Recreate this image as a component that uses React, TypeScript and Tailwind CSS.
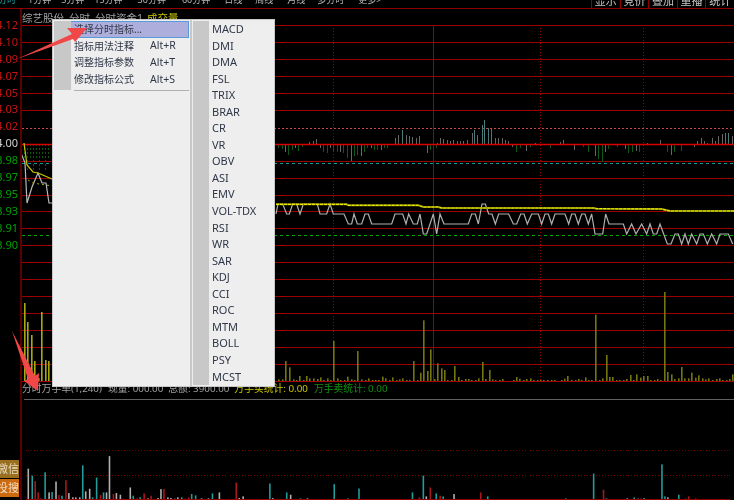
import React from "react";

const FONT = "font-['Noto_Sans','Noto_Sans_CJK_SC',sans-serif]";
const GRID = [25,42,59,76,93,110,161,178,195,211,228,245,262,279,296,313,330,347,364,381];

const AXIS: [string, string][] = [
  ["4.12","text-[#c81414]"],["4.10","text-[#c81414]"],["4.09","text-[#c81414]"],["4.07","text-[#c81414]"],
  ["4.05","text-[#c81414]"],["4.03","text-[#c81414]"],["4.02","text-[#c81414]"],["4.00","text-[#d0d0d0]"],
  ["3.98","text-[#00a000]"],["3.97","text-[#00a000]"],["3.95","text-[#00a000]"],["3.93","text-[#00a000]"],
  ["3.91","text-[#00a000]"],["3.90","text-[#00a000]"],
];

const TABS: [string, string][] = [
  ["1分钟","ml-[10px]"],["5分钟","ml-[10px]"],["15分钟","ml-[10px]"],["30分钟","ml-[15px]"],["60分钟","ml-[16px]"],
  ["日线","ml-[14px]"],["周线","ml-[13px]"],["月线","ml-[14px]"],["多分时","ml-[12px]"],["更多>","ml-[14px]"],
];
const BUTTONS = ["显示","竞价","叠加","重播","统计"];
const SUB = ["MACD","DMI","DMA","FSL","TRIX","BRAR","CR","VR","OBV","ASI","EMV","VOL-TDX","RSI","WR","SAR","KDJ","CCI","ROC","MTM","BOLL","PSY","MCST"];
const MENU: [string, string][] = [["指标用法注释","Alt+R"],["调整指标参数","Alt+T"],["修改指标公式","Alt+S"]];

const VOL_LEFT: [number, number][] = [[24,303],[27,322],[31,335],[34,361],[38,378],[41,312],[45,360],[48,361]];
const VOL_Z: [number, number][] = [[25,298],[36,298],[46,243],[56,262],[68,298],[78,300],[88,288],[98,300],[108,288],[118,295],[128,295],[140,297],[150,292],[160,300],[170,295],[180,300],[190,183],[200,295],[210,300],[222,300],[232,290],[242,298],[252,300],[262,213],[272,298],[284,300],[294,295],[305,300],[315,300],[325,300],[335,290],[345,295],[357,300],[367,292],[377,300],[387,298],[397,295],[407,300],[418,300],[430,243],[440,300],[450,278],[460,121],[470,273],[480,208],[491,297],[502,250],[512,265],[522,270],[532,300],[542,300],[552,258],[564,291],[574,300],[584,297],[594,297],[604,300],[614,300],[624,295],[636,246],[646,297],[656,270],[666,298],[676,300],[686,300],[696,297],[728,300],[738,291],[748,296],[758,300],[768,297],[780,295],[790,300],[800,300],[810,300],[820,300],[830,300],[842,300],[852,300],[872,300],[882,296],[892,288],[902,300],[914,300],[924,297],[934,300],[944,292],[954,300],[964,300],[974,104],[986,300],[996,295],[1007,225],[1017,291],[1027,291],[1037,300],[1047,300],[1059,300],[1069,297],[1079,285],[1089,300],[1099,283],[1109,293],[1119,288],[1131,288],[1141,300],[1151,300],[1161,297],[1171,300],[1181,36],[1191,276],[1203,283],[1213,297],[1223,295],[1233,261],[1243,295],[1253,295],[1263,278],[1275,293],[1285,286],[1295,295],[1305,298],[1315,295],[1327,300],[1337,297],[1347,295],[1357,300],[1367,300],[1377,297],[1387,283]];

const UP: [number, number][] = [[118,65],[128,62],[138,58],[375,55],[385,45],[397,30],[407,45],[417,48],[427,50],[437,55],[447,48],[500,70],[510,55],[520,58],[530,60],[540,62],[550,60],[560,62],[570,62],[580,62],[590,60],[605,40],[612,30],[620,45],[635,15],[643,0],[653,25],[663,25],[675,55],[685,55],[695,55],[705,60],[715,62],[795,68],[870,65],[880,60],[1130,68],[1170,60],[1280,62],[1292,55],[1302,62],[1312,68],[1325,55],[1335,62],[1345,48],[1355,42],[1365,38],[1375,38],[1385,48]];
const DOWN: [number, number][] = [[25,85],[35,88],[45,95],[55,105],[65,90],[75,85],[85,92],[95,80],[150,85],[160,95],[170,98],[180,85],[190,95],[200,95],[210,95],[220,98],[230,115],[242,122],[252,108],[262,105],[272,108],[282,95],[292,85],[302,85],[312,90],[322,90],[332,90],[342,85],[352,85],[470,98],[480,90],[497,85],[725,82],[738,95],[750,85],[768,92],[780,80],[840,85],[912,90],[940,80],[955,95],[975,108],[985,118],[995,125],[1005,95],[1015,88],[1040,80],[1065,88],[1075,100],[1085,95],[1098,92],[1108,95],[1190,95],[1202,105],[1212,95],[1232,92],[1272,80]];

const WHITE: [number, number][] = [[18,282],[24,252],[38,252],[50,282],[58,282],[68,252],[80,252],[90,282],[100,252],[142,252],[150,282],[170,282],[180,252],[190,282],[222,282],[235,312],[245,312],[252,282],[262,312],[275,312],[285,282],[295,282],[305,312],[365,312],[375,282],[398,282],[408,312],[416,282],[430,312],[442,312],[450,282],[460,342],[470,342],[490,282],[500,342],[510,282],[522,312],[595,312],[605,282],[616,282],[625,312],[636,252],[646,252],[656,282],[666,282],[676,312],[686,282],[716,282],[730,312],[740,312],[752,282],[762,282],[772,312],[785,282],[805,282],[815,312],[825,282],[835,282],[845,312],[855,282],[885,282],[896,312],[905,282],[915,282],[925,312],[935,282],[945,282],[955,312],[965,282],[975,342],[998,342],[1007,282],[1017,312],[1060,312],[1070,342],[1085,312],[1098,342],[1115,312],[1130,342],[1140,312],[1150,342],[1160,342],[1170,312],[1192,372],[1203,372],[1215,342],[1225,342],[1235,372],[1245,342],[1255,372],[1265,342],[1280,372],[1290,342],[1300,342],[1312,372],[1325,342],[1340,372],[1350,342],[1375,342],[1388,372]];
const YELLOW: [number, number][] = [[18,253],[230,253],[235,256],[445,256],[460,261],[505,261],[515,264],[970,264],[980,266],[1175,267],[1200,273],[1392,273]];

type Low = [number, number, "g" | "t" | "r"];
const LOW_L: Low[] = [[72,205,"g"],[83,226,"t"],[93,243,"r"],[102,277,"r"],[112,295,"r"],[122,216,"t"],[134,277,"g"],[144,276,"t"],[155,244,"g"],[165,285,"r"],[175,287,"t"],[185,240,"r"],[195,279,"g"],[207,292,"g"],[217,292,"g"],[227,292,"g"],[237,195,"t"],[247,274,"g"],[257,266,"g"],[267,292,"t"],[278,232,"t"],[290,285,"r"],[299,277,"t"],[309,277,"g"],[319,167,"g"],[329,282,"r"],[339,279,"g"],[351,284,"g"],[361,296,"r"],[371,297,"g"],[381,262,"g"],[391,287,"t"],[402,295,"r"],[411,292,"t"],[423,280,"r"],[434,295,"g"],[444,287,"r"],[454,298,"g"],[464,294,"g"],[474,267,"g"],[484,267,"r"],[495,292,"g"],[505,294,"g"],[516,296,"g"],[526,292,"g"],[536,292,"t"],[546,296,"r"],[558,292,"r"],[568,282,"t"],[578,286,"t"],[588,298,"g"],[598,295,"g"],[608,298,"g"],[618,295,"g"],[630,280,"t"],[650,277,"g"],[660,298,"g"],[680,297,"g"],[702,247,"r"],[712,294,"g"],[722,289,"g"],[742,297,"g"],[804,250,"t"],[814,294,"g"],[856,277,"t"],[866,284,"g"],[896,295,"t"],[918,295,"g"],[948,297,"g"],[958,297,"g"],[978,297,"g"],[1000,252,"t"],[1010,297,"g"],[1040,295,"t"],[1073,265,"t"]];
const LOW_R: Low[] = [[136,277,"t"],[156,292,"r"],[168,226,"t"],[178,289,"g"],[188,262,"r"],[208,280,"t"],[218,287,"r"],[228,289,"t"],[260,282,"g"],[342,277,"r"],[362,289,"t"],[600,295,"t"],[650,297,"g"],[684,220,"t"],[714,269,"r"],[724,295,"t"],[736,297,"g"],[786,295,"g"],[808,292,"t"],[818,296,"g"],[828,295,"r"],[838,294,"t"],[890,192,"t"],[900,289,"t"],[910,292,"g"],[942,284,"t"],[962,296,"t"],[972,289,"r"],[992,295,"r"]];
const LOW_COLOR = { g: "#b0b0b0", t: "#249c9c", r: "#a81818" };

const pts = (a: [number, number][]) => a.map(([x, y]) => `${270 + x / 3},${120 + y / 3}`).join(" ");

function MainChart() {
  return (
    <svg className="block shrink-0" width={712} height={358} viewBox="22 25 712 358">
      {GRID.map((y) => (
        <line key={y} x1={22} x2={734} y1={y + 0.5} y2={y + 0.5} stroke="#9c0000" strokeWidth={1.2} />
      ))}
      <line x1={22} x2={734} y1={128.5} y2={128.5} stroke="#c84848" strokeDasharray="2 2" shapeRendering="crispEdges" />
      <line x1={22} x2={734} y1={163.5} y2={163.5} stroke="#0c9c9c" strokeDasharray="3 3" shapeRendering="crispEdges" />
      <line x1={22} x2={734} y1={235.5} y2={235.5} stroke="#00a800" strokeDasharray="3 3" shapeRendering="crispEdges" />
      <line x1={433.5} x2={433.5} y1={25} y2={381} stroke="#a00000" shapeRendering="crispEdges" />
      {[333, 540, 643].map((x) => (
        <line key={x} x1={x + 0.5} x2={x + 0.5} y1={25} y2={381} stroke="#900000" strokeDasharray="1 2" shapeRendering="crispEdges" />
      ))}
      {[24,27,30,33,36,39,42,45,48].map((x, i) => (
        <line key={x} x1={x + 0.5} x2={x + 0.5} y1={144} y2={i % 2 ? 170 : 160} stroke="#0a5a0a" strokeDasharray="2 2" />
      ))}
      {UP.map(([x, t]) => {
        const px = Math.round(270 + x / 3) + 0.5;
        return <line key={"u" + x} x1={px} x2={px} y1={144} y2={120 + t / 3} stroke={t < 40 ? "#4a7a7a" : "#666666"} shapeRendering="crispEdges" />;
      })}
      {DOWN.map(([x, b], i) => {
        const px = Math.round(270 + x / 3) + 0.5;
        return <line key={"d" + x} x1={px} x2={px} y1={144} y2={120 + b / 3} stroke={i % 3 === 2 ? "#666666" : "#0c5a16"} shapeRendering="crispEdges" />;
      })}
      <line x1={22} x2={734} y1={144.5} y2={144.5} stroke="#d80000" strokeWidth={1.5} />
      <polyline points="21,153 25,163 27,203 32,187 38,173 42,183 46,183 49,203 52,203" fill="none" stroke="#b8b8b8" strokeWidth={1.2} />
      <polyline points="24,143 27,165 33,172 38,173 52,179" fill="none" stroke="#c8c800" strokeWidth={1.2} />
      <polyline points="28,180 33,183 52,186" fill="none" stroke="#a8a800" strokeDasharray="2 3" />
      <polyline points={pts(WHITE)} fill="none" stroke="#b0b0b0" strokeWidth={1.2} />
      <polyline points={pts(YELLOW)} fill="none" stroke="#8a8a00" strokeWidth={2} />
      <polyline points={pts(YELLOW)} fill="none" stroke="#ecec00" strokeWidth={1.2} strokeDasharray="3 1" />
      <line x1={22} x2={734} y1={381.5} y2={381.5} stroke="#a80000" shapeRendering="crispEdges" />
      {VOL_LEFT.map(([x, t]) => (
        <rect key={x} x={x} y={t} width={1.6} height={381 - t} fill="#a8a810" />
      ))}
      {VOL_Z.map(([x, t]) => (
        <rect key={x} x={Math.round(270 + x / 3)} y={280 + t / 3} width={1.6} height={381 - (280 + t / 3)} fill="#747410" />
      ))}
    </svg>
  );
}

function LowerChart() {
  return (
    <svg className="block" width={712} height={101} viewBox="22 399 712 101">
      <line x1={22} x2={734} y1={449.5} y2={449.5} stroke="#700000" strokeDasharray="1 2" shapeRendering="crispEdges" />
      <line x1={22} x2={734} y1={475.5} y2={475.5} stroke="#800000" strokeDasharray="1 2" shapeRendering="crispEdges" />
      {LOW_L.map(([x, t, c]) => (
        <rect key={x} x={Math.round(x / 3)} y={400 + t / 3} width={1.6} height={100 - t / 3} fill={LOW_COLOR[c]} />
      ))}
      {LOW_R.map(([x, t, c]) => (
        <rect key={x} x={Math.round(367 + x / 3)} y={400 + t / 3} width={1.6} height={100 - t / 3} fill={LOW_COLOR[c]} />
      ))}
      <line x1={22} x2={734} y1={499.5} y2={499.5} stroke="#900000" shapeRendering="crispEdges" />
    </svg>
  );
}

export default function App() {
  return (
    <div className={`relative flex h-[500px] w-[734px] flex-col overflow-hidden bg-black blur-[0.35px] ${FONT}`}>
      {/* top toolbar */}
      <div className="flex h-[9px] shrink-0 items-start justify-between overflow-hidden border-b border-[#900000]">
        <div className="-mt-[7px] flex text-[9px] leading-[13px] text-[#b8b8b8]">
          <span className="-ml-[2px] w-[20px] text-[#20a0a0]">分时</span>
          {TABS.map(([t, m]) => (
            <span key={t} className={`whitespace-nowrap ${m}`}>{t}</span>
          ))}
        </div>
        <div className="flex">
          {BUTTONS.map((b) => (
            <div key={b} className="-mt-[7px] flex h-[16px] w-[28.6px] justify-center border-l border-[#900000] text-[11px] leading-[15px] text-[#c8c8c8]">{b}</div>
          ))}
        </div>
      </div>

      <div className="flex min-h-0 flex-1">
        {/* price axis */}
        <div className="flex w-[22px] shrink-0 flex-col border-r-2 border-[#5a0000]">
          <div className="mt-[7px] flex flex-col">
            {AXIS.map(([v, c]) => (
              <div key={v} className={`flex h-[16.9px] justify-end pr-[2px] text-[11px] leading-[17px] ${c}`}>
                <span>{v}</span>
              </div>
            ))}
          </div>
          <div className="mt-auto mb-[3px] flex flex-col gap-px">
            <div className="flex h-[18px] w-[19px] justify-end overflow-hidden bg-[#9a7020] text-[11px] leading-[18px] text-[#e8dcc0]">
              <span className="whitespace-nowrap">微信</span>
            </div>
            <div className="flex h-[18px] w-[19px] justify-end overflow-hidden bg-[#cc6a10] text-[11px] leading-[18px] text-[#f0dcc0]">
              <span className="whitespace-nowrap">投搜</span>
            </div>
          </div>
        </div>

        {/* charts */}
        <div className="flex min-w-0 flex-1 flex-col">
          <div className="flex h-[16px] shrink-0 items-center gap-[5px] pt-[2px] text-[10.5px] leading-[14px] text-[#a0a0a0]">
            <span>综艺股份</span>
            <span>分时</span>
            <span>分时资金1</span>
            <span className="-ml-[1px] text-[#c8c800]">成交量</span>
          </div>
          <MainChart />
          <div className="flex h-[16px] shrink-0 items-center whitespace-nowrap pb-[4px] text-[9.8px] leading-[14px] text-[#a0a0a0]">
            <span>分时万手单(1,240)</span>
            <span className="ml-[6px]">现量: 000.00</span>
            <span className="ml-[5px]">总额: 3900.00</span>
            <span className="ml-[5px] text-[#c8c800]">万手买统计: 0.00</span>
            <span className="ml-[6px] text-[#109010]">万手卖统计: 0.00</span>
          </div>
          <div className="ml-[2px] h-px shrink-0 bg-[#606060]" />
          <LowerChart />
        </div>
      </div>

      {/* context menu */}
      <div className="absolute top-[19px] left-[52px] flex h-[368px] w-[223px] border border-[#c8c8c8] bg-[#eeeeee] text-[10px] text-[#303848]">
        <div className="flex w-[139px] shrink-0 flex-col border-r-2 border-[#c8c8c8] py-px pl-px pr-px">
          <div className="flex h-[17px] items-center border border-[#5a9ad8] bg-[#aeaedc] pl-[19px]">
            <span>选择分时指标...</span>
          </div>
          <div className="flex">
            <div className="-mt-[17px] h-[69px] w-[17px] shrink-0 bg-[#c8c8c8]" />
            <div className="flex-1 pl-[3px]">
              {MENU.map(([t, k]) => (
                <div key={t} className="flex h-[16.6px] items-center">
                  <span className="w-[76px]">{t}</span>
                  <span className="text-[10.5px]">{k}</span>
                </div>
              ))}
              <div className="mt-[2px] h-px bg-[#b0b0b0]" />
            </div>
          </div>
        </div>
        <div className="flex flex-1 py-px">
          <div className="ml-px w-[16px] shrink-0 bg-[#c8c8c8]" />
          <div className="flex flex-col pl-[3px] text-[11px]">
            {SUB.map((s) => (
              <div key={s} className="flex h-[16.57px] items-center">{s}</div>
            ))}
          </div>
        </div>
      </div>

      {/* annotation arrows */}
      <svg className="pointer-events-none absolute inset-0" width={734} height={500}>
        <polygon points="17,59 72,34 67,28 87,28 75,42 73,39" fill="#f04848" />
        <polygon points="12,331 35,376 39,373 38,391 24,381 28,379" fill="#f04848" />
      </svg>
    </div>
  );
}
